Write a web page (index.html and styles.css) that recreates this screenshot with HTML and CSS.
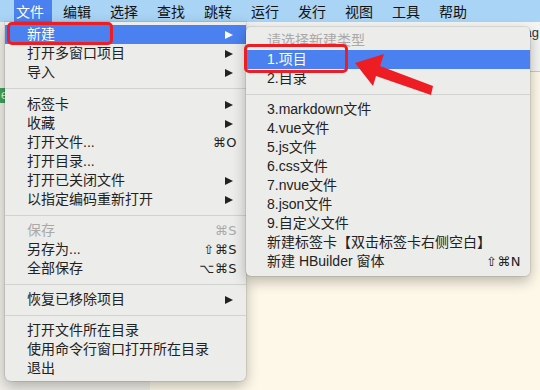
FILE: index.html
```html
<!DOCTYPE html>
<html lang="zh-CN">
<head>
  <meta charset="UTF-8" />
  <title>HBuilderX 文件菜单</title>
  <link rel="stylesheet" href="styles.css">
</head>
<body>
  <div class="menubar">
    <span class="menubar-item active">文件</span>
    <span class="menubar-item">编辑</span>
    <span class="menubar-item">选择</span>
    <span class="menubar-item">查找</span>
    <span class="menubar-item">跳转</span>
    <span class="menubar-item">运行</span>
    <span class="menubar-item">发行</span>
    <span class="menubar-item">视图</span>
    <span class="menubar-item">工具</span>
    <span class="menubar-item">帮助</span>
  </div>

  <div class="workspace">
    <div class="sidebar">
      <div class="sidebar-spacer"></div>
      <div class="sidebar-file">e</div>
    </div>
    <div class="editor">
      <div class="tabs"><span class="tab">ag</span></div>
      <div class="page"></div>
    </div>
  </div>

  <!-- 文件 menu -->
  <div class="menu menu-main">
    <div class="row selected"><span>新建</span><i class="caret"></i></div>
    <div class="row"><span>打开多窗口项目</span><i class="caret"></i></div>
    <div class="row"><span>导入</span><i class="caret"></i></div>
    <div class="sep sep-wide"></div>
    <div class="row"><span>标签卡</span><i class="caret"></i></div>
    <div class="row"><span>收藏</span><i class="caret"></i></div>
    <div class="row"><span>打开文件...</span><span class="key">⌘O</span></div>
    <div class="row"><span>打开目录...</span></div>
    <div class="row"><span>打开已关闭文件</span><i class="caret"></i></div>
    <div class="row"><span>以指定编码重新打开</span><i class="caret"></i></div>
    <div class="sep"></div>
    <div class="row disabled"><span>保存</span><span class="key">⌘S</span></div>
    <div class="row"><span>另存为...</span><span class="key">⇧⌘S</span></div>
    <div class="row"><span>全部保存</span><span class="key">⌥⌘S</span></div>
    <div class="sep"></div>
    <div class="row"><span>恢复已移除项目</span><i class="caret"></i></div>
    <div class="sep"></div>
    <div class="row"><span>打开文件所在目录</span></div>
    <div class="row"><span>使用命令行窗口打开所在目录</span></div>
    <div class="row"><span>退出</span></div>
  </div>

  <!-- 新建 submenu -->
  <div class="menu menu-sub">
    <div class="row disabled"><span>请选择新建类型</span></div>
    <div class="row selected"><span>1.项目</span></div>
    <div class="row"><span>2.目录</span></div>
    <div class="sep"></div>
    <div class="row"><span>3.markdown文件</span></div>
    <div class="row"><span>4.vue文件</span></div>
    <div class="row"><span>5.js文件</span></div>
    <div class="row"><span>6.css文件</span></div>
    <div class="row"><span>7.nvue文件</span></div>
    <div class="row"><span>8.json文件</span></div>
    <div class="row"><span>9.自定义文件</span></div>
    <div class="row"><span>新建标签卡【双击标签卡右侧空白】</span></div>
    <div class="row"><span>新建 HBuilder 窗体</span><span class="key">⇧⌘N</span></div>
  </div>

  <!-- annotations -->
  <div class="mark mark-main"></div>
  <div class="mark mark-sub"></div>
  <svg class="arrow" width="540" height="390" viewBox="0 0 540 390">
    <polygon points="355,63 384,54 380,66 433,86 431,95 376,76 373,86" fill="#ee1d23"/>
  </svg>
</body>
</html>
```

FILE: styles.css
```css
:root {
  --menubar: #a9d4f5;
  --menu-bg: #ececea;
  --select: #4a80f0;
  --text: #222;
  --muted: #a9a9a9;
  --mark: #ee1d23;
  --paper: #fdf8e8;
}
html, body {
  margin: 0;
  width: 540px;
  height: 390px;
  overflow: hidden;
}
body {
  font-family: "Liberation Sans", "Noto Sans CJK SC", sans-serif;
  font-size: 14px;
  color: var(--text);
  background: var(--paper);
  position: relative;
}

/* top bar */
.menubar {
  height: 22px;
  background: var(--menubar);
  display: flex;
  align-items: stretch;
  gap: 9px;
  padding-left: 14px;
}
.menubar-item {
  display: flex;
  align-items: center;
  padding: 0 8px 0 2px;
  color: #111;
}
.menubar-item.active {
  background: var(--select);
  color: #fff;
}

/* what sits under the menus */
.workspace {
  display: flex;
  height: 368px;
}
.sidebar {
  width: 150px;
  background: #efede6;
  display: flex;
  flex-direction: column;
}
.sidebar-spacer { height: 66px; }
.sidebar-file {
  height: 15px;
  width: 14px;
  background: #3fa45a;
  color: #e8f5e8;
  font-size: 12px;
  line-height: 15px;
  padding-left: 1px;
}
.editor {
  flex: 1;
  display: flex;
  flex-direction: column;
}
.tabs {
  height: 49px;
  background: #f4f4f3;
  border-bottom: 1px solid #d8c9a8;
  display: flex;
  justify-content: flex-end;
}
.tab {
  font-size: 13px;
  color: #333;
  margin-top: 3px;
  margin-right: 1px;
}
.page {
  flex: 1;
  background: var(--paper);
}

/* menus */
.menu {
  position: absolute;
  background: var(--menu-bg);
  border-radius: 0 0 6px 6px;
  box-shadow: 0 0 0 1px rgba(0,0,0,0.08), 0 5px 14px rgba(0,0,0,0.28);
}
.menu-main {
  left: 5px;
  top: 22px;
  width: 241px;
  padding: 3px 0 3px;
}
.menu-sub {
  left: 246px;
  top: 27px;
  width: 284px;
  padding: 4px 0 5px;
  border-radius: 5px;
}
.row {
  height: 19px;
  line-height: 19px;
  display: flex;
  align-items: center;
  justify-content: space-between;
  padding: 0 9px 0 22px;
  white-space: nowrap;
}
.menu-sub .row { padding-left: 21px; }
.row.selected {
  background: var(--select);
  color: #fff;
}
.row.disabled { color: var(--muted); }
.key {
  font-family: "DejaVu Sans", "Liberation Sans", sans-serif;
  font-size: 13px;
  letter-spacing: 0.5px;
}
.caret {
  width: 0;
  height: 0;
  margin-right: 4px;
  border-left: 8px solid #222;
  border-top: 4.5px solid transparent;
  border-bottom: 4.5px solid transparent;
}
.row.selected .caret { border-left-color: #fff; }
.sep {
  height: 12px;
  display: flex;
  align-items: center;
}
.sep-wide { height: 13px; }
.sep::before {
  content: "";
  flex: 1;
  height: 1px;
  background: #d2d2d0;
}

/* red annotations */
.mark {
  position: absolute;
  border: 3px solid var(--mark);
  border-radius: 5px;
  box-sizing: border-box;
}
.mark-main {
  left: 7px;
  top: 22px;
  width: 106px;
  height: 23px;
}
.mark-sub {
  left: 244px;
  top: 44px;
  width: 104px;
  height: 29px;
}
.arrow {
  position: absolute;
  left: 0;
  top: 0;
  pointer-events: none;
}
```
